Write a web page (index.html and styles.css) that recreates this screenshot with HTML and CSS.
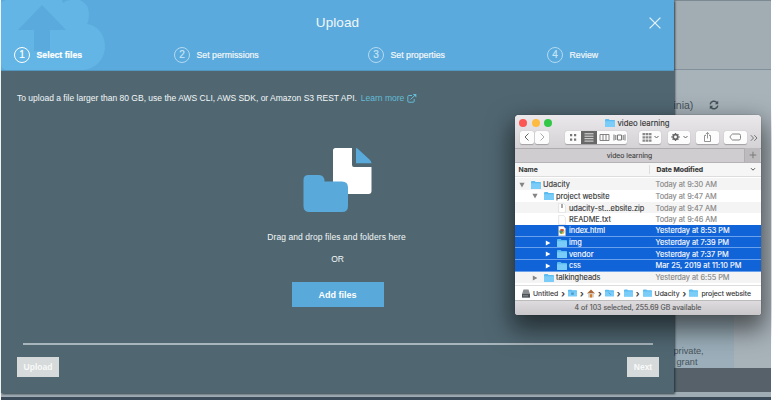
FILE: index.html
```
<!DOCTYPE html>
<html lang="en">
<head>
<meta charset="utf-8">
<title>Upload</title>
<link rel="stylesheet" href="styles.css">
</head>
<body>
<svg class="defs" aria-hidden="true">
  <symbol id="folder" viewBox="0 0 10 8"><path d="M0 1Q0 0 1 0H3.6L4.6 1H9.2Q10 1 10 1.8V7.2Q10 8 9.2 8H.8Q0 8 0 7.2Z" fill="#5bbcf0"/><path d="M0 2.2H10V7.2Q10 8 9.2 8H.8Q0 8 0 7.2Z" fill="#79cdf8"/></symbol>
  <symbol id="down" viewBox="0 0 6 6"><path d="M.4 .8H5.6L3 5.4Z" fill="currentColor"/></symbol>
  <symbol id="right" viewBox="0 0 6 6"><path d="M.8 .4V5.6L5.4 3Z" fill="currentColor"/></symbol>
  <symbol id="page" viewBox="0 0 8 10"><path d="M.7 .3H5.3L7.4 2.5V9.7H.7Z" fill="#fff" stroke="#ccc" stroke-width=".5"/></symbol>
</svg>

<div class="console">
  <div class="console-top"></div>
  <div class="console-main">
    <div class="region"><span>inia)</span>
      <svg width="10" height="10" viewBox="0 0 10 10" fill="none" stroke="#46535b" stroke-width="1.5"><path d="M1.2 4.3A3.8 3.8 0 0 1 8 2.7M8.8 5.7A3.8 3.8 0 0 1 2 7.3"/><path d="M9.2 .8V4.2H5.8ZM.8 9.2V5.8H4.2Z" fill="#46535b" stroke="none"/></svg>
    </div>
    <div class="info"><p>private,</p><p class="grant">grant</p></div>
  </div>
  <div class="console-footer"></div>
  <div class="console-gap"></div>
  <div class="console-end"></div>
</div>

<section class="modal">
  <header class="modal-head">
    <svg class="cloud" width="106" height="70" viewBox="0 0 106 70"><path d="M0 2L5 0H61L62 3Q66 0 69 0H79Q88 4 88 14Q88 20 86 24C96 25 104 34 104 46C104 59 95 69 82 70H5Q0 69 0 64Z" fill="#62b5e4"/><path d="M41 5L65 30H49V51H33V30H17Z" fill="#5aaadd"/></svg>
    <h1>Upload</h1>
    <svg class="close" width="12" height="12" viewBox="0 0 12 12"><path d="M.6 .6L11.4 11.4M11.4 .6L.6 11.4" stroke="#e5f3fb" stroke-width="1.25"/></svg>
    <ol class="steps">
      <li class="active"><i>1</i><span>Select files</span></li>
      <li><i>2</i><span>Set permissions</span></li>
      <li><i>3</i><span>Set properties</span></li>
      <li><i>4</i><span>Review</span></li>
    </ol>
  </header>
  <p class="note"><span>To upload a file larger than 80 GB, use the AWS CLI, AWS SDK, or Amazon S3 REST API.</span> <a>Learn more</a>
    <svg width="10" height="9" viewBox="0 0 10 9" fill="none" stroke="#64bcd6"><path d="M5 1.5H1.8Q.8 1.5 .8 2.5V7.2Q.8 8.2 1.8 8.2H6.2Q7.2 8.2 7.2 7.2V5M3.5 5.5L8 1.2"/><path d="M5.800 0H9.300V3.600Z" fill="#64bcd6" stroke="none"/></svg>
  </p>
  <div class="drop">
    <svg width="70" height="66" viewBox="0 0 70 66"><path d="M32.500 1H49V18Q49 20 51 20H68.500V44Q68.500 47 65.500 47H33Q30 47 30 44V3.500Q30 1 32.500 1Z" fill="#fff"/><path d="M53 1Q54 1 55 2L67 13Q68 14 68.500 16.300H53Z" fill="#59aadb"/><path d="M5.500 28H16Q21.500 28 21.500 34.500H39Q45 34.500 45 40.500V59Q45 65 39 65H6.500Q.5 65 .5 59V33Q.5 28 5.500 28Z" fill="#59aadb"/></svg>
    <p class="drag">Drag and drop files and folders here</p>
    <p class="or">OR</p>
    <button class="add">Add files</button>
  </div>
  <footer class="modal-foot"><button class="up">Upload</button><button class="next">Next</button></footer>
</section>

<section class="finder">
  <div class="chrome">
    <div class="titlebar">
      <div class="lights"><b class="red"></b><b class="yellow"></b><b class="green"></b></div>
      <svg class="title-folder" width="10" height="8"><use href="#folder"/></svg><span class="title">video learning</span>
    </div>
    <div class="toolbar">
      <div class="btn nav"><svg width="14" height="12" viewBox="0 0 14 12"><path d="M8.500 2.500L5 6L8.500 9.500" fill="none" stroke="#666"/></svg></div>
      <div class="btn nav forward"><svg width="14" height="12" viewBox="0 0 14 12"><path d="M5.500 2.500L9 6L5.500 9.500" fill="none" stroke="#aaa"/></svg></div>
      <div class="views">
        <svg width="16" height="13" viewBox="0 0 16 13" fill="#777"><path d="M5 3H7.200V5.200H5ZM9 3H11.200V5.200H9ZM5 7.500H7.200V9.700H5ZM9 7.500H11.200V9.700H9Z"/></svg>
        <svg class="chosen" width="16" height="13" viewBox="0 0 16 13" stroke="#e2e2e2"><path d="M3.500 2.800H12.500M3.500 5.200H12.500M3.500 7.700H12.500M3.500 10.100H12.500"/></svg>
        <svg width="15" height="13" viewBox="0 0 15 13" fill="none" stroke="#777" stroke-width=".9"><path d="M3 3.500H12V9.500H3ZM6 3.500V9.500M9 3.500V9.500"/></svg>
        <svg width="15" height="13" viewBox="0 0 15 13" fill="none" stroke="#777"><path d="M5.500 4H9.500V9H5.500ZM2 3.500V9.500M3.800 4V9M11.200 4V9M13 3.500V9.500"/></svg>
      </div>
      <div class="btn arrange"><svg width="22" height="12" viewBox="0 0 22 12"><path d="M3.500 2H12.500V4.200H3.500ZM3.500 5.300H12.500V7.500H3.500ZM3.500 8.500H12.500V10.700H3.500Z" fill="#888"/><path d="M6.400 2V11M9.600 2V11" stroke="#fff" stroke-width=".6"/><path d="M15.500 5L17.500 7L19.500 5" fill="none" stroke="#666"/></svg></div>
      <div class="btn action"><svg width="22" height="12" viewBox="0 0 22 12"><circle cx="7.500" cy="6" r="2.300" fill="none" stroke="#666" stroke-width="1.700"/><path d="M7.500 1.900V3M7.500 9V10.100M3.400 6H4.500M10.500 6H11.600M4.600 3.100L5.400 3.900M9.600 8.100L10.400 8.900M4.600 8.900L5.400 8.100M9.600 3.900L10.400 3.100" stroke="#666" stroke-width="1.300"/><path d="M15.500 5L17.500 7L19.500 5" fill="none" stroke="#666"/></svg></div>
      <div class="btn share"><svg width="23" height="12" viewBox="0 0 23 12" fill="none" stroke="#888" stroke-width=".9"><path d="M10 4.500H8.500V10.500H14.500V4.500H13M11.500 7.500V1.500M9.700 3.200L11.500 1.500L13.300 3.200"/></svg></div>
      <div class="btn tag"><svg width="23" height="12" viewBox="0 0 23 12" fill="none" stroke="#777" stroke-width=".9"><path d="M8.500 3H15Q16.500 3 16.500 4.500V7.500Q16.500 9 15 9H8.500L6.200 6.800V5.200Z"/></svg></div>
      <svg class="more" width="8" height="8" viewBox="0 0 8 8" fill="none" stroke="#777"><path d="M.8 1.200L3.500 4L.8 6.800M4.300 1.200L7 4L4.300 6.800"/></svg>
    </div>
  </div>
  <div class="tabs"><span>video learning</span><svg width="16" height="14" viewBox="0 0 16 14"><path d="M5 7H12M8.500 3.500V10.500" stroke="#777"/></svg></div>
  <div class="cols"><span class="name">Name</span><span class="date">Date Modified</span><svg width="6" height="5" viewBox="0 0 6 5"><path d="M1 1.200L3 3.200L5 1.200" fill="none" stroke="#555"/></svg></div>
  <div class="files">
    <div class="row odd"><div class="file l0"><svg class="tri"><use href="#down"/></svg><svg class="ico"><use href="#folder"/></svg><span>Udacity</span></div><time>Today at 9:30 AM</time></div>
    <div class="row"><div class="file l1"><svg class="tri"><use href="#down"/></svg><svg class="ico"><use href="#folder"/></svg><span>project website</span></div><time>Today at 9:47 AM</time></div>
    <div class="row odd"><div class="file l2"><svg class="tri"></svg><svg class="ico doc" viewBox="0 0 8 10"><use href="#page"/><path d="M4 1V5" stroke="#555"/></svg><span>udacity-st...ebsite.zip</span></div><time>Today at 9:47 AM</time></div>
    <div class="row"><div class="file l2"><svg class="tri"></svg><svg class="ico doc"><use href="#page"/></svg><span>README.txt</span></div><time>Today at 9:46 AM</time></div>
    <div class="row sel"><div class="file l2"><svg class="tri"></svg><svg class="ico doc" viewBox="0 0 8 10"><use href="#page"/><circle cx="4" cy="5.500" r="2.500" fill="#e5b83a"/><path d="M1.800 4.300A2.500 2.500 0 0 1 6.200 4.300L4 5.500Z" fill="#d94a3a"/><path d="M1.800 4.300A2.500 2.500 0 0 0 3.600 8L4 5.500Z" fill="#48a04e"/><circle cx="4" cy="5.500" r=".9" fill="#4a80d8"/></svg><span>index.html</span></div><time>Yesterday at 8:53 PM</time></div>
    <div class="row sel"><div class="file l2"><svg class="tri"><use href="#right"/></svg><svg class="ico"><use href="#folder"/></svg><span>img</span></div><time>Yesterday at 7:39 PM</time></div>
    <div class="row sel"><div class="file l2"><svg class="tri"><use href="#right"/></svg><svg class="ico"><use href="#folder"/></svg><span>vendor</span></div><time>Yesterday at 7:37 PM</time></div>
    <div class="row sel"><div class="file l2"><svg class="tri"><use href="#right"/></svg><svg class="ico"><use href="#folder"/></svg><span>css</span></div><time class="long">Mar 25, 2019 at 11:10 PM</time></div>
    <div class="row odd"><div class="file l1"><svg class="tri"><use href="#right"/></svg><svg class="ico"><use href="#folder"/></svg><span>talkingheads</span></div><time>Yesterday at 6:55 PM</time></div>
    <div class="row"><svg class="partial" width="8" height="4"><path d="M1.500 4V1.500H7V4" fill="#eee" stroke="#999" stroke-width=".7"/></svg></div>
  </div>
  <div class="path">
    <svg class="disk" width="8" height="9" viewBox="0 0 8 9"><path d="M1.500 .5H6.500L8 5V8.500H0V5Z" fill="#8a8d90"/><path d="M0 5H8V8.500H0Z" fill="#4c5257"/><path d="M1 6.800H6" stroke="#bbb" stroke-width=".6"/></svg>
    <span>Untitled</span><em>›</em>
    <svg class="pf" viewBox="0 0 10 8"><use href="#folder"/><path d="M3.500 3.500H6.500V6H3.500Z" fill="#4a9bcc"/></svg><em>›</em>
    <svg class="home" width="8" height="9" viewBox="0 0 8 9"><path d="M0 4.500L4 .5L8 4.500Z" fill="#aa6839"/><path d="M1.200 4.200H6.800V8.500H1.200Z" fill="#d5cbbd"/><path d="M3 5.200H5V8.500H3Z" fill="#d47b2c"/></svg><em>›</em>
    <svg class="pf" viewBox="0 0 10 8"><use href="#folder"/><path d="M4 3.500L6.500 6" stroke="#4a9bcc"/></svg><em>›</em>
    <svg class="pf"><use href="#folder"/></svg><em>›</em>
    <svg class="pf"><use href="#folder"/></svg><span>Udacity</span><em>›</em>
    <svg class="pf"><use href="#folder"/></svg><span>project website</span>
  </div>
  <div class="status">4 of 103 selected, 255.69 GB available</div>
</section>
</body>
</html>
```
FILE: styles.css
```
* { box-sizing: border-box; }
body { margin: 0; width: 772px; height: 400px; overflow: hidden; position: relative; font-family: "Liberation Sans", Arial, sans-serif; background: #fff; }
h1, p, ol { margin: 0; padding: 0; }
button { border: 0; padding: 0; font-family: inherit; }
svg { display: block; flex: none; }
.defs { position: absolute; width: 0; height: 0; }

.console { display: flex; flex-direction: column; height: 400px; margin: 0 1px; color: #46535b; }
.console-top { height: 70px; background: #a1adb3; border-top: 1px solid #7b8991; border-bottom: 1px solid #81909a; }
.console-main { height: 298px; background: #a7b2b9; padding-left: 672.500px; display: flex; flex-direction: column; justify-content: space-between; }
.region { display: flex; align-items: center; gap: 15px; height: 20px; margin-top: 25px; font-size: 10.500px; }
.region span { width: 20px; white-space: nowrap; }
.info { width: 60px; height: 140px; background: #9baeb9; padding-top: 118px; font-size: 9.200px; line-height: 11px; }
.grant { padding-left: 3px; }
.console-footer { height: 24px; background: #566169; }
.console-gap { height: 5px; background: #a0acb3; }
.console-end { height: 3px; background: #3c4b59; }

.modal { position: absolute; left: 1px; top: 0; width: 673px; height: 393px; display: flex; flex-direction: column; background: #506772; color: #f3f7f8; box-shadow: 1px 1px 2px rgba(20,35,45,.8); }
.modal-head { height: 71px; flex: none; background: #5aaadd; display: grid; grid-template: 46px 25px / 1fr 25px; position: relative; border-bottom: 1px solid #5298c3; }
.cloud { position: absolute; left: 0; top: 0; }
.modal h1 { font-size: 13.500px; font-weight: 400; line-height: 46px; text-align: center; padding-left: 25px; letter-spacing: .1px; }
.close { margin-top: 17px; }
.steps { grid-column: 1 / 3; display: grid; grid-template-columns: 160px 194px 179px auto; list-style: none; padding-left: 13px; position: relative; }
.steps li { display: flex; align-items: center; gap: 6.500px; height: 17px; font-size: 8.750px; white-space: nowrap; -webkit-text-stroke: .2px; }
.steps i { width: 16px; height: 16px; border: 1px solid #b4d9f1; border-radius: 50%; font-style: normal; font-size: 10px; line-height: 14px; text-align: center; color: #c8e4f5; }
.steps .active { font-weight: 700; color: #fff; }
.steps .active i { color: #fff; border-color: #fff; font-weight: 400; }
.note { display: flex; align-items: center; height: 12px; margin: 21px 0 0 16px; font-size: 8.500px; white-space: nowrap; }
.note a { color: #64bcd6; margin: 0 3px 0 4px; }
.drop { flex: 1; display: flex; flex-direction: column; align-items: center; padding-top: 43px; font-size: 8.500px; }
.drag { margin: 18px 2px 0 0; line-height: 12px; letter-spacing: .08px; }
.or { margin-top: 10px; line-height: 12px; }
.add { width: 92px; height: 25px; margin-top: 17px; background: #59aadb; color: #fff; font-size: 9px; font-weight: 700; }
.modal-foot { display: flex; justify-content: space-between; height: 50px; margin: 0 15px 0 16px; padding-top: 14px; position: relative; background: linear-gradient(#a9b5bc, #a9b5bc) 6px 0 / 630px 2px no-repeat; }
.modal-foot button { height: 20px; background: #d6dada; color: #f8f9f9; font-weight: 700; font-size: 8.500px; }
.up { width: 42px; }
.next { width: 32px; }

.finder { position: absolute; left: 515px; top: 115px; width: 246px; height: 200px; border-radius: 4px 4px 3px 3px; overflow: hidden; display: flex; flex-direction: column; background: #fff; font-family: Inter, "Liberation Sans", sans-serif; font-size: 7.400px; color: #333; box-shadow: 0 11px 24px 4px rgba(0,0,0,.55), 0 0 1px rgba(0,0,0,.6); -webkit-text-stroke: .12px; }
.chrome { height: 33px; background: linear-gradient(#eae8ea, #d4d2d5); }
.titlebar { height: 15px; display: flex; align-items: center; white-space: nowrap; }
.lights { display: flex; gap: 4.500px; margin-left: 4px; width: 86px; }
.lights b { width: 8px; height: 8px; border-radius: 50%; }
.red { background: #fc5753; }
.yellow { background: #fdbc40; }
.green { background: #33c748; }
.title { margin-left: 2.500px; font-size: 7.750px; }
.toolbar { display: flex; align-items: center; height: 15px; padding-left: 5px; }
.btn { height: 13px; background: #fcfcfc; border-radius: 2px; box-shadow: 0 .5px 1px rgba(0,0,0,.25); }
.nav { width: 14px; margin-right: 1px; }
.views { display: flex; gap: 0; height: 13px; margin-left: 15px; background: #fcfcfc; border-radius: 2px; box-shadow: 0 .5px 1px rgba(0,0,0,.25); }
.chosen { background: #686868; }
.arrange { width: 22px; margin-left: 12px; }
.action { width: 22px; margin-left: 6.500px; }
.share { width: 23px; margin-left: 6px; }
.tag { width: 23px; margin-left: 5px; }
.more { margin-left: 3px; }
.tabs { height: 15px; display: flex; align-items: center; background: #cfcdd0; border-top: 1px solid #aeacae; border-bottom: 1px solid #b5b3b5; color: #444; font-size: 6.800px; }
.tabs span { width: 229px; text-align: center; }
.tabs svg { background: #bdbbbd; border-left: 1px solid #b0aeb0; }
.cols { height: 14px; display: flex; align-items: center; background: #f6f6f6; border-bottom: 1px solid #ddd; font-size: 6.800px; font-weight: 600; }
.name { width: 134px; padding-left: 3.500px; }
.date { width: 101px; padding-left: 6.500px; border-left: 1px solid #ddd; font-weight: 700; }
.files { height: 109px; overflow: hidden; padding-top: 1.600px; }
.row { height: 11.670px; display: flex; align-items: center; padding-top: 1.200px; white-space: nowrap; }
.odd { background: #f4f4f4; }
.sel { background: #1164d8; color: #fff; border-bottom: 1px solid #69a1ec; }
.file { width: 140.500px; display: flex; align-items: center; flex: none; }
.l0 { padding-left: 4px; }
.l1 { padding-left: 17px; }
.l2 { padding-left: 30px; }
.tri { width: 6px; height: 6px; margin-right: 6px; color: #858585; }
.sel .tri { color: #fff; }
.ico { width: 10px; height: 8px; margin-right: 2px; }
.doc { height: 10px; }
.row time { color: #858585; letter-spacing: -.03px; }
.row.sel time { color: #fff; }
.row .long { letter-spacing: .02px; }
.partial { margin: 0 0 7px 29px; }
.path { height: 15px; display: flex; align-items: center; border-top: 1px solid #ddd; padding-left: 7px; font-size: 6.850px; white-space: nowrap; }
.path em { font-style: normal; font-weight: 600; width: 9.900px; text-align: center; font-size: 9px; line-height: 9px; }
.pf { width: 9px; height: 8px; }
.path span { margin-left: 3px; }
.status { flex: 1; background: linear-gradient(#dedcdf, #c9c7ca); border-top: 1px solid #bbb; text-align: center; line-height: 14px; font-size: 7px; color: #555; }
```
